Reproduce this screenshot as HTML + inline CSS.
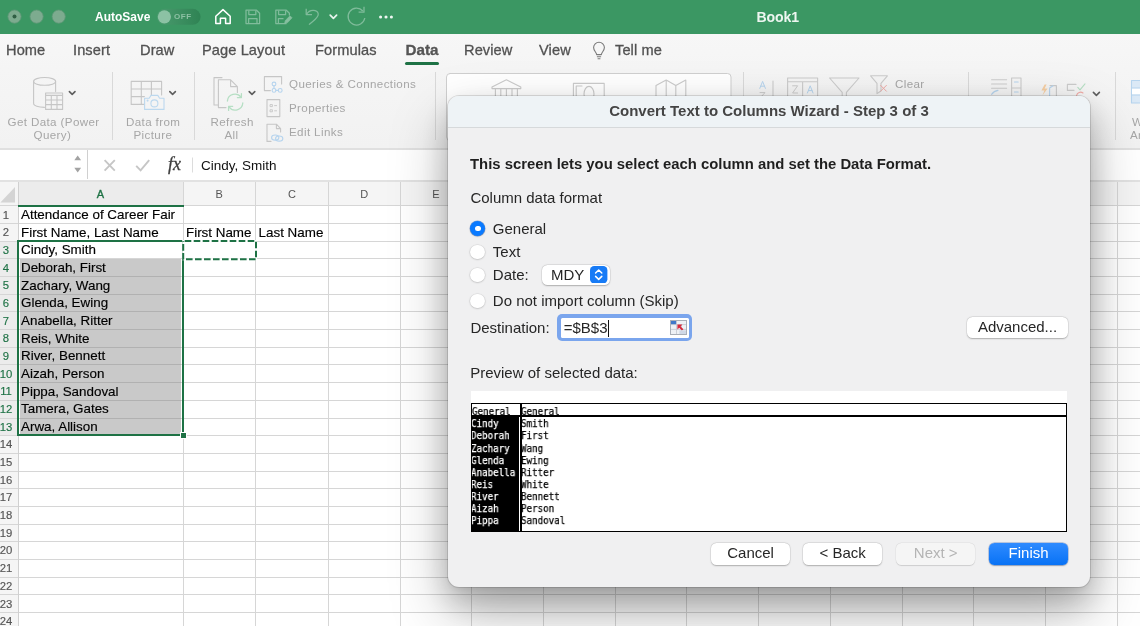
<!DOCTYPE html>
<html lang="en">
<head>
<meta charset="utf-8">
<title>Book1</title>
<style>
*{box-sizing:border-box;margin:0;padding:0}
html,body{width:1140px;height:626px;overflow:hidden;background:#fff}
body{font-family:"Liberation Sans",sans-serif;position:relative;color:#000}
.abs{position:absolute}
#titlebar,#tabs,#ribbon,#fbar,#grid,#dlg{will-change:transform}
.t{position:absolute;white-space:nowrap;line-height:1}
/* title bar */
#titlebar{position:absolute;left:0;top:0;width:1140px;height:34px;background:#3b9763}
/* tab row */
#tabs{position:absolute;left:0;top:34px;width:1140px;height:34px;background:linear-gradient(#f7f7f7,#f5f5f5)}
#tabs .t{font-size:14.6px;color:#525252;top:9px;letter-spacing:.1px;-webkit-text-stroke:.3px #525252}
/* ribbon */
#ribbon{position:absolute;left:0;top:68px;width:1140px;height:81px;background:linear-gradient(#f5f5f5,#f2f2f2);border-bottom:1px solid #e0e0e0}
#ribbon .t{font-size:11.6px;color:#a6a6a6;letter-spacing:.38px}
.vsep{position:absolute;width:1px;background:#d9d9d9;top:72px;height:68px}
/* formula bar */
#fbar{position:absolute;left:0;top:149px;width:1140px;height:31px;background:#fff}
/* grid */
#grid{position:absolute;left:0;top:180px;width:1140px;height:446px;background:#fff;overflow:hidden}
.cell{-webkit-text-stroke:.15px #000;position:absolute;font-size:13.4px;line-height:1;white-space:nowrap;color:#000;left:21px}
.rn{-webkit-text-stroke:.15px currentColor;position:absolute;left:-9px;width:30px;text-align:center;font-size:11.3px;color:#555;line-height:1}
.ch{position:absolute;top:9.2px;font-size:11px;color:#555;line-height:1;width:72px;text-align:center}
/* dialog */
#dlg{position:absolute;left:448px;top:96px;width:642px;height:491px;border-radius:11px;background:#f0f0f1;
 box-shadow:0 0 0 1px rgba(0,0,0,.12),0 26px 58px rgba(0,0,0,.27),0 14px 30px rgba(0,0,0,.20),0 2px 6px rgba(0,0,0,.06);overflow:hidden}
#dlg .t{font-size:15px;color:#262626}
#dtitle{position:absolute;left:0;top:0;width:642px;height:32px;background:#eef3f6;border-bottom:1px solid #d6d9db}
.radio{position:absolute;width:14px;height:14px;border-radius:50%;background:#fff;box-shadow:0 0 0 .5px rgba(0,0,0,.06),0 .5px 2px rgba(0,0,0,.22)}
.btn{position:absolute;height:21px;border-radius:5.5px;background:#fff;box-shadow:0 0 0 .5px rgba(0,0,0,.07),0 .5px 1.5px rgba(0,0,0,.25);font-size:13.4px;text-align:center;line-height:21px;color:#262626}
.m{will-change:transform;position:absolute;white-space:nowrap;line-height:1;transform:scaleX(.885);-webkit-text-stroke:.25px currentColor;transform-origin:0 0;color:#000}
</style>
</head>
<body>

<div id="titlebar">
<svg class="abs" style="left:0;top:0" width="420" height="34" viewBox="0 0 420 34" fill="none">
 <circle cx="14.5" cy="16.6" r="6.6" fill="#7dab8f" stroke="#5f9877" stroke-width=".8"/><circle cx="14.5" cy="16.6" r="2" fill="#2f5f44"/>
 <circle cx="36.6" cy="16.6" r="6.6" fill="#7dab8f" stroke="#5f9877" stroke-width=".8"/>
 <circle cx="58.7" cy="16.6" r="6.6" fill="#7dab8f" stroke="#5f9877" stroke-width=".8"/>
 <defs><linearGradient id="tg" x1="0" x2="1" y1="0" y2="0"><stop offset="0" stop-color="#4a9b6e"/><stop offset="1" stop-color="#2f8354"/></linearGradient></defs><rect x="157" y="8.8" width="43.6" height="16" rx="8" fill="url(#tg)"/>
 <circle cx="164.4" cy="16.8" r="6.6" fill="#8cc2a4"/>
 <!-- home -->
 <path d="M215.8 16.2 L223 9.6 L230.2 16.2 V23.6 H225.6 V18.2 H220.4 V23.6 H215.8 Z" stroke="#fff" stroke-width="1.5" stroke-linejoin="round"/>
 <!-- save -->
 <g stroke="#80bc9b" stroke-width="1.25" stroke-linejoin="round">
 <path d="M246 10.2 H256.5 L259.6 13.3 V23.6 H246 Z"/>
 <path d="M248.8 10.4 V14.6 H255.8 V10.4"/>
 <path d="M248.6 23.4 V18.6 H257 V23.4"/>
 <!-- save edit -->
 <path d="M286.5 23.6 H275.8 V10.2 H286.3 L289.4 13.3 V15.5"/>
 <path d="M278.6 10.4 V14.6 H285.6 V10.4"/>
 <path d="M278.4 23.4 V18.6 H283.5"/>
 <path d="M284.6 23.6 L285.4 20.4 L290 15.8 L292 17.8 L287.6 22.6 Z" fill="#86bf9f" stroke-width=".8"/>
 <!-- undo -->
 <path d="M306.2 8.8 V14.6 H312" />
 <path d="M306.6 14.2 C309.5 9.2 317 9.2 318.2 13.6 C319.2 17.4 313.5 20.6 309 24.6"/>
 <!-- redo -->
 <path d="M362.8 11 A8.4 8.4 0 1 0 364.8 18"/>
 <path d="M358.6 12.2 H364 V6.8"/>
 </g>
 <path d="M330.2 15.2 L333.4 18.4 L336.6 15.2" stroke="#e9f4ee" stroke-width="1.7" stroke-linecap="round" stroke-linejoin="round"/>
 <circle cx="380.6" cy="17" r="1.55" fill="#eef7f2"/><circle cx="386" cy="17" r="1.55" fill="#eef7f2"/><circle cx="391.4" cy="17" r="1.55" fill="#eef7f2"/>
</svg>
<div class="t" style="left:95px;top:11px;font-size:12px;font-weight:bold;color:#fff;letter-spacing:0">AutoSave</div>
<div class="t" style="left:174px;top:13px;font-size:8px;font-weight:bold;color:#8cc0a3;letter-spacing:.6px">OFF</div>
<div class="t" style="left:756.5px;top:10.1px;font-size:14.1px;font-weight:bold;color:#edf6f0;letter-spacing:-.1px">Book1</div>
</div>
<div id="tabs">
<div class="t" style="left:6px">Home</div>
<div class="t" style="left:73px">Insert</div>
<div class="t" style="left:140px">Draw</div>
<div class="t" style="left:202px">Page Layout</div>
<div class="t" style="left:315px">Formulas</div>
<div class="t" style="left:405.5px;font-weight:bold;letter-spacing:0;font-size:15.2px;color:#555;top:7.5px">Data</div>
<div class="abs" style="left:405px;top:27.5px;width:34px;height:3px;border-radius:1.5px;background:#1e7245"></div>
<div class="t" style="left:464px">Review</div>
<div class="t" style="left:539px">View</div>
<svg class="abs" style="left:590px;top:5px" width="18" height="24" viewBox="0 0 18 24" fill="none" stroke="#7a7a7a" stroke-width="1.1">
 <path d="M6.6 15.6 C6.6 13.2 3.6 12 3.6 8.6 A5.4 5.4 0 0 1 14.4 8.6 C14.4 12 11.4 13.2 11.4 15.6 Z" stroke-linejoin="round"/>
 <path d="M6.9 17.8 H11.1 M7.6 19.8 H10.4"/>
</svg>
<div class="t" style="left:615px">Tell me</div>
</div>
<div id="ribbon">
<svg class="abs" style="left:0;top:0" width="1140" height="80" viewBox="0 68 1140 80" fill="none" stroke="#c6c6c6" stroke-width="1.1" stroke-linejoin="round" stroke-linecap="round">
 <!-- Get data: cylinder + table -->
 <path d="M33.6 81.4 V103.6 C33.6 105.8 38.4 107.4 44.4 107.4 M55.6 81.4 V91.6"/>
 <ellipse cx="44.6" cy="81.4" rx="11" ry="3.9"/>
 <path d="M45.6 93 H62.6 V109.4 H45.6 Z M45.6 95.4 H62.6 M45.6 100 H62.6 M45.6 104.6 H62.6 M51.3 95.4 V109.4 M57 95.4 V109.4" fill="#f4f4f4"/>
 <!-- table + camera -->
 <path d="M131.2 81.4 H161.6 V95 M131.2 81.4 V104.4 H144 M131.2 89 H161.6 M131.2 96.6 H144.4 M141.3 81.4 V104.4 M151.4 81.4 V95"/>
 <path d="M144.6 98.2 H149.2 L151 95.4 H157.8 L159.6 98.2 H164 V109.4 H144.6 Z" stroke="#bcd8ee" fill="#f4f4f4"/>
 <circle cx="154.4" cy="103.4" r="3.5" stroke="#bcd8ee"/>
 <circle cx="147.6" cy="100.6" r=".5" stroke="#bcd8ee"/>
 <!-- refresh all -->
 <path d="M222 77.6 H214 V105 H218"/>
 <path d="M218.4 79.8 H230.6 L237.4 86.6 V92.4 M218.4 79.8 V107.6 H226 M230.6 79.8 V86.6 H237.4"/>
 <g stroke="#b6dfc4" stroke-width="1.3">
 <path d="M227.4 101 A7.6 7.6 0 0 1 241 97.2 M242.8 103 A7.6 7.6 0 0 1 229 106.8"/>
 <path d="M241.4 93.6 V97.6 H237.4 M228.6 110.4 V106.4 H232.6"/>
 </g>
 <!-- chevrons -->
 <g stroke="#5e5e5e" stroke-width="1.6">
 <path d="M69.4 91.6 L72.2 94.4 L75 91.6"/>
 <path d="M169.8 91.6 L172.6 94.4 L175.4 91.6"/>
 <path d="M249.2 91.6 L252 94.4 L254.8 91.6"/>
 <path d="M1093.4 92.4 L1096.4 95.4 L1099.4 92.4"/>
 </g>
 <!-- queries & connections -->
 <path d="M264.4 90.6 V76.6 H281.6 V84 M264.4 90.6 H270.4"/>
 <g stroke="#b6d4ee"><circle cx="274" cy="90.4" r="1.9"/><circle cx="280.2" cy="90.4" r="1.9"/><circle cx="274" cy="84" r="1.9"/><path d="M276 90.4 H278.2 M274 86 V88.4"/></g>
 <!-- properties -->
 <path d="M267 99.6 H279.8 V116.6 H267 Z"/>
 <path d="M270.4 104.6 H272.4 V106.6 H270.4 Z M270.4 109.8 H272.4 V111.8 H270.4 Z M274.6 105.6 H276.6 M274.6 110.8 H276.6" stroke-width=".9"/>
 <!-- edit links -->
 <path d="M271 141.4 H267 V124.2 H276.4 L280.6 128.6 V132 M276.4 124.2 V128.6 H280.6"/>
 <g stroke="#b6d4ee" stroke-width="1.2"><ellipse cx="275.2" cy="137.6" rx="3.6" ry="2.6"/><ellipse cx="279.2" cy="138.6" rx="3.6" ry="2.6"/></g>
 <!-- data types gallery -->
 <rect x="446.5" y="73.5" width="284.5" height="67" rx="3.5" fill="#fff" stroke="#cfcfcf" stroke-width="1"/>
 <g stroke="#cbcbcb">
 <path d="M506.4 79.8 L520.8 87 V88.6 H492 V87 Z"/>
 <path d="M495.4 89 V98 M500.8 89 V98 M506.4 89 V98 M512 89 V98 M517.4 89 V98"/>
 <path d="M573.4 98 V83.4 H604.2 V98 M576.2 98 V86 H582"/>
 <ellipse cx="589" cy="94" rx="5" ry="7.6"/>
 <path d="M656 98 V85.6 L666.2 80 L675.8 85.6 L685.8 80 V98 M666.2 80 V98 M675.8 85.6 V98"/>
 <!-- sort / filter -->
 <path d="M773 81 V98"/>
 <path d="M787.6 98 V78 H817.6 V98 M787.6 81.8 H817.6 M802.6 81.8 V98"/>
 <path d="M792.6 85.8 H797.6 L792.6 93 H797.6" stroke-width="1"/>
 <path d="M829.6 78 H859 L846.4 92.4 V98 M829.6 78 L842.2 92.4 V98"/>
 <path d="M870.6 75.8 H887.4 L881 83.4 V91 L877 93.6 V83.4 Z"/>
 <path d="M991.6 79.8 H1006.6 M991.6 84 H1006.6 M991.6 88.2 H1006.6"/>
 <path d="M1011.6 78 H1021 V98 M1011.6 78 V98 M1011.6 88 H1021"/>
 <path d="M1067.4 84.4 H1076 M1067.4 84.4 V90.4 H1074"/>
 <path d="M1056.4 98 V85.6 H1050"/>
 </g>
 <path d="M759.8 88.4 L762.6 81.4 L765.4 88.4 M760.8 86.2 H764.4" stroke="#b6d4ee" stroke-width="1"/>
 <path d="M760 92.6 H765 L760 98" stroke="#cbcbcb" stroke-width="1"/>
 <path d="M807.4 93 L810.2 85.8 L813 93 M808.4 90.6 H812" stroke="#b6d4ee" stroke-width="1"/>
 <path d="M880.6 85.4 L886.4 91.2 M886.4 85.4 L880.6 91.2" stroke="#f0aaa6" stroke-width="1"/>
 <path d="M1014.4 82 H1018.2 M1014.4 92 H1018.2" stroke="#b6d4ee"/>
 <path d="M991.6 94.4 Q994 91 998 90.4" stroke="#b6d4ee"/>
 <path d="M1044.6 84.6 L1041.4 90.6 H1044.4 L1042.4 95.4 L1047.6 88.6 H1044.6 L1046.6 84.6 Z" fill="#f6cfa4" stroke="none"/>
 <path d="M1049.6 98 V88 L1053 85.8" stroke="#b6d4ee"/>
 <path d="M1077.8 87.4 L1080 89.8 L1085 83.8" stroke="#b6dfc4"/>
 <path d="M1076.6 95.4 A4 4 0 0 1 1083 93" stroke="#f0aaa6"/>
 <!-- what-if table -->
 <path d="M1131.5 80.5 H1141 V103 H1131.5 Z" fill="#dbe9f6" stroke="#b6d4ee"/>
 <path d="M1132 88.2 H1141 V94.6 H1132 Z" fill="#fff" stroke="none"/>
 <path d="M1131.5 88 H1141 M1131.5 95 H1141" stroke="#b6d4ee"/>
</svg>
<div class="t" style="left:7.5px;top:47.5px">Get Data (Power</div>
<div class="t" style="left:33.5px;top:60.5px">Query)</div>
<div class="t" style="left:126px;top:47.5px">Data from</div>
<div class="t" style="left:133.5px;top:60.5px">Picture</div>
<div class="t" style="left:210.5px;top:47.5px">Refresh</div>
<div class="t" style="left:224.5px;top:60.5px">All</div>
<div class="t" style="left:289px;top:10px">Queries &amp; Connections</div>
<div class="t" style="left:289px;top:34.2px">Properties</div>
<div class="t" style="left:289px;top:58.2px">Edit Links</div>
<div class="t" style="left:895px;top:9.5px">Clear</div>
<div class="t" style="left:1132px;top:47.5px">W</div>
<div class="t" style="left:1130px;top:60.5px">Ar</div>
</div>
<div class="vsep" style="left:112px"></div>
<div class="vsep" style="left:194px"></div>
<div class="vsep" style="left:435px"></div>
<div class="vsep" style="left:743px"></div>
<div class="vsep" style="left:968px"></div>
<div class="vsep" style="left:1115px"></div>
<div id="fbar">
<div class="abs" style="left:0;top:0;width:1140px;height:1px;background:#e0e0e0"></div>
<div class="abs" style="left:86.5px;top:1px;width:1px;height:29px;background:#d0d0d0"></div>
<svg class="abs" style="left:70px;top:4px" width="130" height="24" viewBox="70 153 130 24" fill="none">
 <path d="M74.3 160.2 L77.7 155.4 L81.1 160.2 Z M74.3 167.8 L77.7 172.6 L81.1 167.8 Z" fill="#a3a3a3"/>
 <path d="M104.6 160.2 L114.8 170.6 M114.8 160.2 L104.6 170.6" stroke="#c6c6c6" stroke-width="1.9"/>
 <path d="M136.2 165.8 L140.6 170.4 L149.2 160.2" stroke="#c6c6c6" stroke-width="1.9"/>
 <path d="M192.5 157.5 V172.5" stroke="#dcdcdc" stroke-width="1"/>
</svg>
<div class="t" style="left:168px;top:6px;font-family:'Liberation Serif',serif;font-style:italic;font-size:18px;color:#3f3f3f;letter-spacing:0;-webkit-text-stroke:.3px #3f3f3f">fx</div>
<div class="t" style="left:201px;top:9.5px;font-size:13.5px;color:#111">Cindy, Smith</div>
</div>
<div id="grid">
<div class="abs" style="left:0;top:-1px;width:1140px;height:2.5px;background:linear-gradient(#c4c4c4,#c4c4c4 1px,#e2e2e2 1px)"></div>
<div class="abs" style="left:0;top:1.5px;width:1140px;height:23.5px;background:#f5f5f5"></div>
<div class="abs" style="left:18px;top:1.5px;width:165px;height:23.5px;background:#ececec"></div>
<div class="abs" style="left:0;top:25px;width:18px;height:421px;background:#f5f5f5"></div>
<div class="abs" style="left:0;top:60.7px;width:18px;height:194.5px;background:#ececec"></div>
<svg class="abs" style="left:0;top:4px" width="18" height="20" viewBox="0 0 18 20"><path d="M15 3 V18.4 H0.4 Z" fill="#d4d4d4"/></svg>
<div class="abs" style="left:0;top:25.3px;width:1140px;height:1px;background:#d6d6d6"></div>
<div class="abs" style="left:0;top:43.0px;width:1140px;height:1px;background:#d6d6d6"></div>
<div class="abs" style="left:0;top:60.7px;width:1140px;height:1px;background:#d6d6d6"></div>
<div class="abs" style="left:0;top:78.3px;width:1140px;height:1px;background:#d6d6d6"></div>
<div class="abs" style="left:0;top:96.0px;width:1140px;height:1px;background:#d6d6d6"></div>
<div class="abs" style="left:0;top:113.7px;width:1140px;height:1px;background:#d6d6d6"></div>
<div class="abs" style="left:0;top:131.4px;width:1140px;height:1px;background:#d6d6d6"></div>
<div class="abs" style="left:0;top:149.1px;width:1140px;height:1px;background:#d6d6d6"></div>
<div class="abs" style="left:0;top:166.7px;width:1140px;height:1px;background:#d6d6d6"></div>
<div class="abs" style="left:0;top:184.4px;width:1140px;height:1px;background:#d6d6d6"></div>
<div class="abs" style="left:0;top:202.1px;width:1140px;height:1px;background:#d6d6d6"></div>
<div class="abs" style="left:0;top:219.8px;width:1140px;height:1px;background:#d6d6d6"></div>
<div class="abs" style="left:0;top:237.5px;width:1140px;height:1px;background:#d6d6d6"></div>
<div class="abs" style="left:0;top:255.1px;width:1140px;height:1px;background:#d6d6d6"></div>
<div class="abs" style="left:0;top:272.8px;width:1140px;height:1px;background:#d6d6d6"></div>
<div class="abs" style="left:0;top:290.5px;width:1140px;height:1px;background:#d6d6d6"></div>
<div class="abs" style="left:0;top:308.2px;width:1140px;height:1px;background:#d6d6d6"></div>
<div class="abs" style="left:0;top:325.9px;width:1140px;height:1px;background:#d6d6d6"></div>
<div class="abs" style="left:0;top:343.5px;width:1140px;height:1px;background:#d6d6d6"></div>
<div class="abs" style="left:0;top:361.2px;width:1140px;height:1px;background:#d6d6d6"></div>
<div class="abs" style="left:0;top:378.9px;width:1140px;height:1px;background:#d6d6d6"></div>
<div class="abs" style="left:0;top:396.6px;width:1140px;height:1px;background:#d6d6d6"></div>
<div class="abs" style="left:0;top:414.3px;width:1140px;height:1px;background:#d6d6d6"></div>
<div class="abs" style="left:0;top:431.9px;width:1140px;height:1px;background:#d6d6d6"></div>
<div class="abs" style="left:0;top:449.6px;width:1140px;height:1px;background:#d6d6d6"></div>
<div class="abs" style="left:17.5px;top:1.5px;width:1px;height:445px;background:#d0d0d0"></div>
<div class="abs" style="left:182.5px;top:1.5px;width:1px;height:445px;background:#d6d6d6"></div>
<div class="abs" style="left:255.0px;top:1.5px;width:1px;height:445px;background:#d6d6d6"></div>
<div class="abs" style="left:327.9px;top:1.5px;width:1px;height:445px;background:#d6d6d6"></div>
<div class="abs" style="left:399.5px;top:1.5px;width:1px;height:445px;background:#d6d6d6"></div>
<div class="abs" style="left:471.2px;top:1.5px;width:1px;height:445px;background:#d6d6d6"></div>
<div class="abs" style="left:543.0px;top:1.5px;width:1px;height:445px;background:#d6d6d6"></div>
<div class="abs" style="left:614.7px;top:1.5px;width:1px;height:445px;background:#d6d6d6"></div>
<div class="abs" style="left:686.4px;top:1.5px;width:1px;height:445px;background:#d6d6d6"></div>
<div class="abs" style="left:758.2px;top:1.5px;width:1px;height:445px;background:#d6d6d6"></div>
<div class="abs" style="left:829.9px;top:1.5px;width:1px;height:445px;background:#d6d6d6"></div>
<div class="abs" style="left:901.6px;top:1.5px;width:1px;height:445px;background:#d6d6d6"></div>
<div class="abs" style="left:973.3px;top:1.5px;width:1px;height:445px;background:#d6d6d6"></div>
<div class="abs" style="left:1045.1px;top:1.5px;width:1px;height:445px;background:#d6d6d6"></div>
<div class="abs" style="left:1116.8px;top:1.5px;width:1px;height:445px;background:#d6d6d6"></div>
<div class="ch" style="left:18px;width:165px;color:#1e7245;-webkit-text-stroke:.35px #1e7245">A</div>
<div class="ch" style="left:183.0px;width:72.5px">B</div>
<div class="ch" style="left:255.5px;width:72.9px">C</div>
<div class="ch" style="left:328.4px;width:71.6px">D</div>
<div class="ch" style="left:400.0px;width:71.7px">E</div>
<div class="ch" style="left:471.7px;width:71.7px">F</div>
<div class="ch" style="left:543.5px;width:71.7px">G</div>
<div class="ch" style="left:615.2px;width:71.7px">H</div>
<div class="ch" style="left:686.9px;width:71.7px">I</div>
<div class="ch" style="left:758.7px;width:71.7px">J</div>
<div class="ch" style="left:830.4px;width:71.7px">K</div>
<div class="ch" style="left:902.1px;width:71.7px">L</div>
<div class="ch" style="left:973.8px;width:71.7px">M</div>
<div class="ch" style="left:1045.6px;width:71.7px">N</div>
<div class="ch" style="left:1117.3px;width:71.7px">O</div>
<div class="abs" style="left:20px;top:78.8px;width:160.6px;height:174.8px;background:#c9c9c9"></div>
<div class="abs" style="left:20px;top:96.0px;width:160.6px;height:1px;background:#b1b1b1"></div>
<div class="abs" style="left:20px;top:113.7px;width:160.6px;height:1px;background:#b1b1b1"></div>
<div class="abs" style="left:20px;top:131.4px;width:160.6px;height:1px;background:#b1b1b1"></div>
<div class="abs" style="left:20px;top:149.1px;width:160.6px;height:1px;background:#b1b1b1"></div>
<div class="abs" style="left:20px;top:166.7px;width:160.6px;height:1px;background:#b1b1b1"></div>
<div class="abs" style="left:20px;top:184.4px;width:160.6px;height:1px;background:#b1b1b1"></div>
<div class="abs" style="left:20px;top:202.1px;width:160.6px;height:1px;background:#b1b1b1"></div>
<div class="abs" style="left:20px;top:219.8px;width:160.6px;height:1px;background:#b1b1b1"></div>
<div class="abs" style="left:20px;top:237.5px;width:160.6px;height:1px;background:#b1b1b1"></div>
<div class="rn" style="top:29.5px">1</div>
<div class="rn" style="top:47.2px">2</div>
<div class="rn" style="top:64.9px;color:#1e7245">3</div>
<div class="rn" style="top:82.5px;color:#1e7245">4</div>
<div class="rn" style="top:100.2px;color:#1e7245">5</div>
<div class="rn" style="top:117.9px;color:#1e7245">6</div>
<div class="rn" style="top:135.6px;color:#1e7245">7</div>
<div class="rn" style="top:153.3px;color:#1e7245">8</div>
<div class="rn" style="top:170.9px;color:#1e7245">9</div>
<div class="rn" style="top:188.6px;color:#1e7245">10</div>
<div class="rn" style="top:206.3px;color:#1e7245">11</div>
<div class="rn" style="top:224.0px;color:#1e7245">12</div>
<div class="rn" style="top:241.7px;color:#1e7245">13</div>
<div class="rn" style="top:259.3px">14</div>
<div class="rn" style="top:277.0px">15</div>
<div class="rn" style="top:294.7px">16</div>
<div class="rn" style="top:312.4px">17</div>
<div class="rn" style="top:330.1px">18</div>
<div class="rn" style="top:347.7px">19</div>
<div class="rn" style="top:365.4px">20</div>
<div class="rn" style="top:383.1px">21</div>
<div class="rn" style="top:400.8px">22</div>
<div class="rn" style="top:418.5px">23</div>
<div class="rn" style="top:436.1px">24</div>
<div class="cell" style="top:27.9px">Attendance of Career Fair</div>
<div class="cell" style="top:45.6px">First Name, Last Name</div>
<div class="cell" style="top:63.3px">Cindy, Smith</div>
<div class="cell" style="top:80.9px">Deborah, First</div>
<div class="cell" style="top:98.6px">Zachary, Wang</div>
<div class="cell" style="top:116.3px">Glenda, Ewing</div>
<div class="cell" style="top:134.0px">Anabella, Ritter</div>
<div class="cell" style="top:151.7px">Reis, White</div>
<div class="cell" style="top:169.3px">River, Bennett</div>
<div class="cell" style="top:187.0px">Aizah, Person</div>
<div class="cell" style="top:204.7px">Pippa, Sandoval</div>
<div class="cell" style="top:222.4px">Tamera, Gates</div>
<div class="cell" style="top:240.1px">Arwa, Allison</div>
<div class="cell" style="left:186px;top:45.6px">First Name</div>
<div class="cell" style="left:258.6px;top:45.6px">Last Name</div>
<div class="abs" style="left:18px;top:24.5px;width:165.5px;height:2px;background:#1e7245"></div>
<div class="abs" style="left:17px;top:59.7px;width:167px;height:196.5px;border:2px solid #1e7245"></div>
<div class="abs" style="left:179.5px;top:251.6px;width:7px;height:7px;background:#1e7245;border:1px solid #fff"></div>
<svg class="abs" style="left:180px;top:57.7px" width="80" height="26" viewBox="0 0 80 26" fill="none"><rect x="3.2" y="3" width="72.8" height="18.3" stroke="#fff" stroke-width="2"/><rect x="3.2" y="3" width="72.8" height="18.3" stroke="#1e7245" stroke-width="2" stroke-dasharray="6.6 2.4" stroke-dashoffset="-1.5"/></svg>
</div>
<div id="dlg"><div id="dtitle"></div>
<div class="t" style="left:0;width:642px;text-align:center;top:7.3px;font-weight:bold;color:#444">Convert Text to Columns Wizard - Step 3 of 3</div>
<div class="abs" style="left:0;top:-1px;width:642px;height:492px">
<div class="t" style="left:22.0px;top:62.2px;font-weight:bold;color:#1f1f1f;font-size:14.85px">This screen lets you select each column and set the Data Format.</div>
<div class="t" style="left:22.4px;top:94.5px;">Column data format</div>
<div class="radio" style="left:22.2px;top:126.0px;width:15px;height:15px;background:#0a7aff;box-shadow:0 0 0 .5px rgba(0,60,160,.35),0 .5px 1.5px rgba(0,0,0,.25)"><div class="abs" style="left:4.6px;top:4.6px;width:5.8px;height:5.8px;border-radius:50%;background:#fff"></div></div>
<div class="radio" style="left:22.4px;top:149.7px;width:14.6px;height:14.6px"></div>
<div class="radio" style="left:22.4px;top:172.7px;width:14.6px;height:14.6px"></div>
<div class="radio" style="left:22.4px;top:198.5px;width:14.6px;height:14.6px"></div>
<div class="t" style="left:44.8px;top:125.8px;">General</div>
<div class="t" style="left:44.8px;top:148.8px;">Text</div>
<div class="t" style="left:44.8px;top:171.8px;">Date:</div>
<div class="t" style="left:44.8px;top:197.6px;">Do not import column (Skip)</div>
<div class="btn" style="left:94.2px;top:169.6px;width:67.6px;height:20.8px;border-radius:5.5px"></div>
<div class="t" style="left:103.0px;top:171.8px;">MDY</div>
<svg class="abs" style="left:142.4px;top:171.0px" width="17.4" height="17.4" viewBox="0 0 17.4 17.4" fill="none"><rect width="17.4" height="17.4" rx="4.2" fill="#177bf6"/><path d="M5.6 7 L8.7 4 L11.8 7 M5.6 10.4 L8.7 13.4 L11.8 10.4" stroke="#fff" stroke-width="1.5" stroke-linecap="round" stroke-linejoin="round"/></svg>
<div class="t" style="left:22.4px;top:225.1px;">Destination:</div>
<div class="abs" style="left:109.1px;top:218.9px;width:135.4px;height:27.0px;border-radius:5px;background:#7aa5ed"></div>
<div class="abs" style="left:112.7px;top:222.8px;width:128.5px;height:19.8px;border-radius:1.5px;background:#fff"></div>
<div class="t" style="left:115.7px;top:225.1px;">=$B$3</div>
<div class="abs" style="left:160.3px;top:225.0px;width:1px;height:16.5px;background:#111"></div>
<svg class="abs" style="left:222.2px;top:225.2px" width="17" height="15" viewBox="0 0 17 15" fill="none">
 <rect x=".5" y=".5" width="16" height="14" fill="#eef1f5" stroke="#a9afb8"/>
 <rect x="1" y="1" width="5.4" height="3.6" fill="#3f78c9"/>
 <path d="M6.5 1 V14 M11.5 4.6 V14 M1 4.6 H16 M1 9.4 H16" stroke="#c2c7cf" stroke-width=".8"/>
 <path d="M7.4 4.6 H12.4 L10.6 6.4 L13.4 9.2 L12 10.6 L9.2 7.8 L7.4 9.6 Z" fill="#d6283a"/>
 <rect x="9.4" y="10.4" width="6.6" height="3.6" fill="#cfd8e6"/>
</svg>
<div class="btn" style="left:518.6px;top:221.6px;width:101.8px;height:21.6px;line-height:20.4px;font-size:15px">Advanced...</div>
<div class="t" style="left:22.2px;top:269.5px;">Preview of selected data:</div>
<div class="abs" style="left:23.0px;top:296.0px;width:596px;height:11.5px;background:#fff"></div>
<div id="pv" class="abs" style="left:23px;top:307.6px;width:596px;height:129.2px;background:#fff;overflow:hidden;font-family:'DejaVu Sans Mono','Liberation Mono',monospace;font-size:10.4px">
<div class="m" style="left:0.8px;top:3.8px">General</div>
<div class="m" style="left:50.2px;top:3.8px">General</div>
<div class="abs" style="left:0;top:12px;width:47.6px;height:118px;background:#000"></div>
<div class="m" style="left:0.2px;top:15.8px;color:#fff">Cindy</div>
<div class="m" style="left:49.8px;top:15.8px">Smith</div>
<div class="m" style="left:0.2px;top:27.9px;color:#fff">Deborah</div>
<div class="m" style="left:49.8px;top:27.9px">First</div>
<div class="m" style="left:0.2px;top:40.0px;color:#fff">Zachary</div>
<div class="m" style="left:49.8px;top:40.0px">Wang</div>
<div class="m" style="left:0.2px;top:52.1px;color:#fff">Glenda</div>
<div class="m" style="left:49.8px;top:52.1px">Ewing</div>
<div class="m" style="left:0.2px;top:64.2px;color:#fff">Anabella</div>
<div class="m" style="left:49.8px;top:64.2px">Ritter</div>
<div class="m" style="left:0.2px;top:76.3px;color:#fff">Reis</div>
<div class="m" style="left:49.8px;top:76.3px">White</div>
<div class="m" style="left:0.2px;top:88.4px;color:#fff">River</div>
<div class="m" style="left:49.8px;top:88.4px">Bennett</div>
<div class="m" style="left:0.2px;top:100.5px;color:#fff">Aizah</div>
<div class="m" style="left:49.8px;top:100.5px">Person</div>
<div class="m" style="left:0.2px;top:112.6px;color:#fff">Pippa</div>
<div class="m" style="left:49.8px;top:112.6px">Sandoval</div>
<div class="abs" style="left:0;top:0;width:596px;height:1.4px;background:#000"></div>
<div class="abs" style="left:0;top:12.2px;width:596px;height:2.2px;background:#000"></div>
<div class="abs" style="left:0;top:0;width:1.4px;height:130px;background:#000"></div>
<div class="abs" style="left:594.6px;top:0;width:1.4px;height:130px;background:#000"></div>
<div class="abs" style="left:0;top:128.2px;width:596px;height:1px;background:#000"></div>
<div class="abs" style="left:49.4px;top:0;width:1.5px;height:130px;background:#000"></div>
</div>
<div class="btn" style="left:263.0px;top:448.2px;width:79.2px;height:21.6px;line-height:20.4px;font-size:15px;">Cancel</div>
<div class="btn" style="left:355.2px;top:448.2px;width:79.1px;height:21.6px;line-height:20.4px;font-size:15px;">&lt; Back</div>
<div class="btn" style="left:448.2px;top:448.2px;width:79.0px;height:21.6px;line-height:20.4px;font-size:15px;color:#b4b4b4;background:#f5f5f5;box-shadow:0 0 0 .5px rgba(0,0,0,.05),0 .5px 1px rgba(0,0,0,.12);">Next &gt;</div>
<div class="btn" style="left:541.0px;top:448.2px;width:79.2px;height:21.6px;line-height:20.4px;font-size:15px;color:#fff;background:linear-gradient(#2f8bff,#0872f5);box-shadow:0 0 0 .5px rgba(0,70,190,.4),0 .5px 1.5px rgba(0,0,0,.25);">Finish</div>
</div>
</div>

</body>
</html>
